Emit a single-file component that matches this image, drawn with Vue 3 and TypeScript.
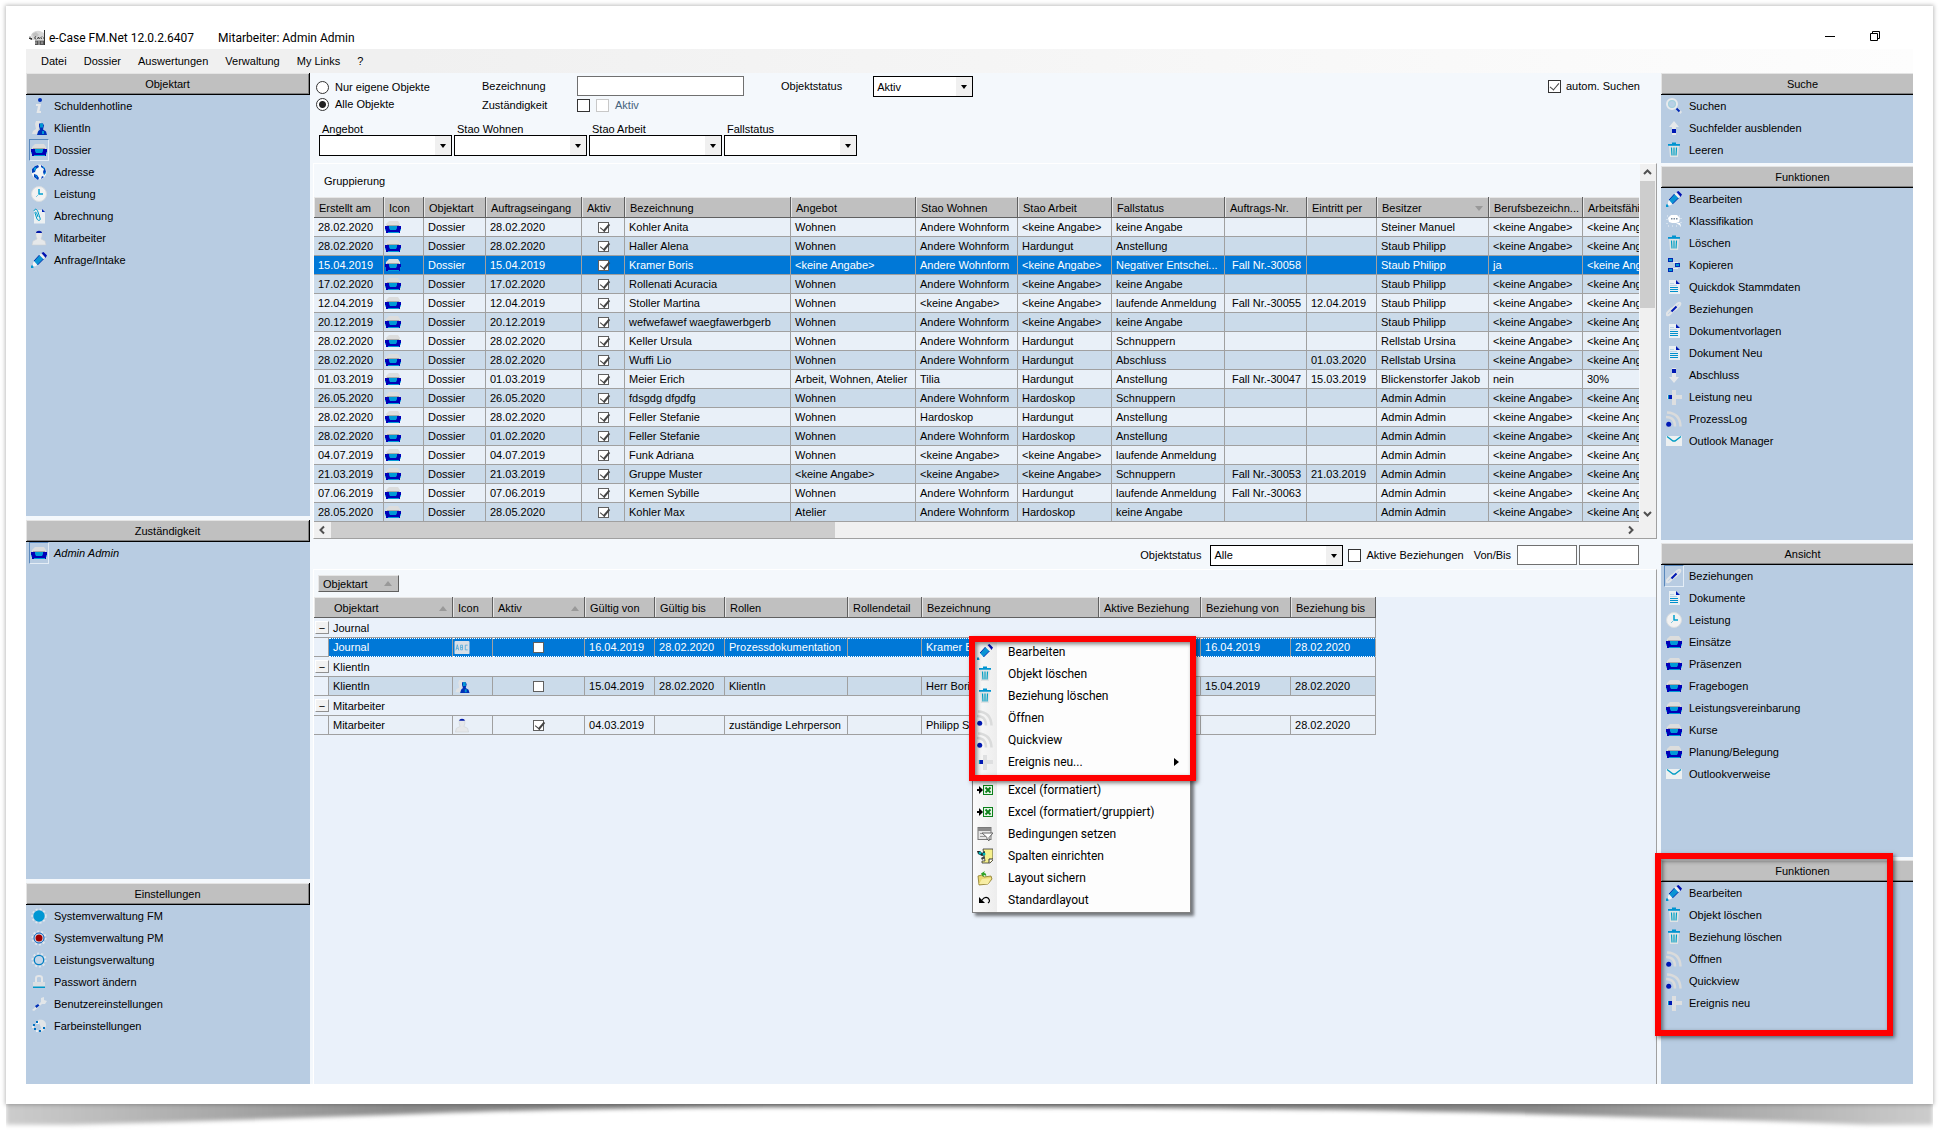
<script setup lang="ts">
import { ref } from 'vue'

interface Item {
  icon: string
  label: string
  active?: boolean
  italic?: boolean
}
interface Panel {
  title: string
  items: Item[]
}

const menuBar: string[] = ['Datei', 'Dossier', 'Auswertungen', 'Verwaltung', 'My Links', '?']

const leftPanels: Panel[] = [
  {
    title: 'Objektart',
    items: [
      { icon: 'info', label: 'Schuldenhotline' },
      { icon: 'client', label: 'KlientIn' },
      { icon: 'folder', label: 'Dossier', active: true },
      { icon: 'globe', label: 'Adresse' },
      { icon: 'clock', label: 'Leistung' },
      { icon: 'clip', label: 'Abrechnung' },
      { icon: 'person', label: 'Mitarbeiter' },
      { icon: 'pencil', label: 'Anfrage/Intake' },
    ],
  },
  { title: 'Zuständigkeit', items: [{ icon: 'folder', label: 'Admin Admin', active: true, italic: true }] },
  {
    title: 'Einstellungen',
    items: [
      { icon: 'gearfm', label: 'Systemverwaltung FM' },
      { icon: 'gearpm', label: 'Systemverwaltung PM' },
      { icon: 'gear', label: 'Leistungsverwaltung' },
      { icon: 'lock', label: 'Passwort ändern' },
      { icon: 'wrench', label: 'Benutzereinstellungen' },
      { icon: 'palette', label: 'Farbeinstellungen' },
    ],
  },
]

const rightPanels: Panel[] = [
  {
    title: 'Suche',
    items: [
      { icon: 'search', label: 'Suchen' },
      { icon: 'up', label: 'Suchfelder ausblenden' },
      { icon: 'trash', label: 'Leeren' },
    ],
  },
  {
    title: 'Funktionen',
    items: [
      { icon: 'pencil', label: 'Bearbeiten' },
      { icon: 'bubble', label: 'Klassifikation' },
      { icon: 'trash', label: 'Löschen' },
      { icon: 'copy', label: 'Kopieren' },
      { icon: 'doc', label: 'Quickdok Stammdaten' },
      { icon: 'link', label: 'Beziehungen' },
      { icon: 'doc', label: 'Dokumentvorlagen' },
      { icon: 'doc', label: 'Dokument Neu' },
      { icon: 'down', label: 'Abschluss' },
      { icon: 'plus', label: 'Leistung neu' },
      { icon: 'feed', label: 'ProzessLog' },
      { icon: 'mail', label: 'Outlook Manager' },
    ],
  },
  {
    title: 'Ansicht',
    items: [
      { icon: 'link', label: 'Beziehungen', active: true },
      { icon: 'doc', label: 'Dokumente' },
      { icon: 'clock', label: 'Leistung' },
      { icon: 'folder', label: 'Einsätze' },
      { icon: 'folder', label: 'Präsenzen' },
      { icon: 'folder', label: 'Fragebogen' },
      { icon: 'folder', label: 'Leistungsvereinbarung' },
      { icon: 'folder', label: 'Kurse' },
      { icon: 'folder', label: 'Planung/Belegung' },
      { icon: 'mail', label: 'Outlookverweise' },
    ],
  },
  {
    title: 'Funktionen',
    items: [
      { icon: 'pencil', label: 'Bearbeiten' },
      { icon: 'trash', label: 'Objekt löschen' },
      { icon: 'trash', label: 'Beziehung löschen' },
      { icon: 'feed', label: 'Öffnen' },
      { icon: 'feed', label: 'Quickview' },
      { icon: 'plus', label: 'Ereignis neu' },
    ],
  },
]

const contextTop: Item[] = [
  { icon: 'pencil', label: 'Bearbeiten' },
  { icon: 'trash', label: 'Objekt löschen' },
  { icon: 'trash', label: 'Beziehung löschen' },
  { icon: 'feed', label: 'Öffnen' },
  { icon: 'feed', label: 'Quickview' },
  { icon: 'plus', label: 'Ereignis neu...' },
]
const contextBottom: Item[] = [
  { icon: 'excel', label: 'Excel (formatiert)' },
  { icon: 'excel', label: 'Excel (formatiert/gruppiert)' },
  { icon: 'filter', label: 'Bedingungen setzen' },
  { icon: 'columns', label: 'Spalten einrichten' },
  { icon: 'save', label: 'Layout sichern' },
  { icon: 'undo', label: 'Standardlayout' },
]

const filters: string[] = ['Angebot', 'Stao Wohnen', 'Stao Arbeit', 'Fallstatus']

const NA = '<keine Angabe>'
const AW = 'Andere Wohnform'

const columns: { label: string; width: number }[] = [
  { label: 'Erstellt am', width: 70 },
  { label: 'Icon', width: 40 },
  { label: 'Objektart', width: 62 },
  { label: 'Auftragseingang', width: 96 },
  { label: 'Aktiv', width: 43 },
  { label: 'Bezeichnung', width: 166 },
  { label: 'Angebot', width: 125 },
  { label: 'Stao Wohnen', width: 102 },
  { label: 'Stao Arbeit', width: 94 },
  { label: 'Fallstatus', width: 113 },
  { label: 'Auftrags-Nr.', width: 82 },
  { label: 'Eintritt per', width: 70 },
  { label: 'Besitzer', width: 112 },
  { label: 'Berufsbezeichn...', width: 94 },
  { label: 'Arbeitsfähigkeit', width: 94 },
]

// created, received, name, Angebot, Stao Wohnen, Stao Arbeit, Fallstatus, Nr., Eintritt, Besitzer, Beruf, Arbeitsfähigkeit
const rows: string[][] = [
  ['28.02.2020', '28.02.2020', 'Kohler Anita', 'Wohnen', AW, NA, 'keine Angabe', '', '', 'Steiner Manuel', NA, NA],
  ['28.02.2020', '28.02.2020', 'Haller Alena', 'Wohnen', AW, 'Hardungut', 'Anstellung', '', '', 'Staub Philipp', NA, NA],
  ['15.04.2019', '15.04.2019', 'Kramer Boris', NA, AW, NA, 'Negativer Entschei...', 'Fall Nr.-30058', '', 'Staub Philipp', 'ja', NA],
  ['17.02.2020', '17.02.2020', 'Rollenati Acuracia', 'Wohnen', AW, NA, 'keine Angabe', '', '', 'Staub Philipp', NA, NA],
  ['12.04.2019', '12.04.2019', 'Stoller Martina', 'Wohnen', NA, NA, 'laufende Anmeldung', 'Fall Nr.-30055', '12.04.2019', 'Staub Philipp', NA, NA],
  ['20.12.2019', '20.12.2019', 'wefwefawef waegfawerbgerb', 'Wohnen', AW, NA, 'keine Angabe', '', '', 'Staub Philipp', NA, NA],
  ['28.02.2020', '28.02.2020', 'Keller Ursula', 'Wohnen', AW, 'Hardungut', 'Schnuppern', '', '', 'Rellstab Ursina', NA, NA],
  ['28.02.2020', '28.02.2020', 'Wuffi Lio', 'Wohnen', AW, 'Hardungut', 'Abschluss', '', '01.03.2020', 'Rellstab Ursina', NA, NA],
  ['01.03.2019', '01.03.2019', 'Meier Erich', 'Arbeit, Wohnen, Atelier', 'Tilia', 'Hardungut', 'Anstellung', 'Fall Nr.-30047', '15.03.2019', 'Blickenstorfer Jakob', 'nein', '30%'],
  ['26.05.2020', '26.05.2020', 'fdsgdg dfgdfg', 'Wohnen', AW, 'Hardoskop', 'Schnuppern', '', '', 'Admin Admin', NA, NA],
  ['28.02.2020', '28.02.2020', 'Feller Stefanie', 'Wohnen', 'Hardoskop', 'Hardungut', 'Anstellung', '', '', 'Admin Admin', NA, NA],
  ['28.02.2020', '01.02.2020', 'Feller Stefanie', 'Wohnen', AW, 'Hardoskop', 'Anstellung', '', '', 'Admin Admin', NA, NA],
  ['04.07.2019', '04.07.2019', 'Funk Adriana', 'Wohnen', NA, NA, 'laufende Anmeldung', '', '', 'Admin Admin', NA, NA],
  ['21.03.2019', '21.03.2019', 'Gruppe Muster', NA, NA, NA, 'Schnuppern', 'Fall Nr.-30053', '21.03.2019', 'Admin Admin', NA, NA],
  ['07.06.2019', '07.06.2019', 'Kemen Sybille', 'Wohnen', AW, 'Hardungut', 'laufende Anmeldung', 'Fall Nr.-30063', '', 'Admin Admin', NA, NA],
  ['28.05.2020', '28.05.2020', 'Kohler Max', 'Atelier', AW, 'Hardoskop', 'keine Angabe', '', '', 'Admin Admin', NA, NA],
]

const relColumns: { label: string; width: number; sort?: boolean }[] = [
  { label: 'Objektart', width: 124, sort: true },
  { label: 'Icon', width: 40 },
  { label: 'Aktiv', width: 92, sort: true },
  { label: 'Gültig von', width: 70 },
  { label: 'Gültig bis', width: 70 },
  { label: 'Rollen', width: 123 },
  { label: 'Rollendetail', width: 74 },
  { label: 'Bezeichnung', width: 177 },
  { label: 'Aktive Beziehung', width: 102 },
  { label: 'Beziehung von', width: 90 },
  { label: 'Beziehung bis', width: 85 },
]

interface Relation {
  kind: string
  icon: string
  active: boolean
  style: string
  cells: string[]
}
const relations: Relation[] = [
  { kind: 'Journal', icon: 'abc', active: false, style: 'picked', cells: ['16.04.2019', '28.02.2020', 'Prozessdokumentation', '', 'Kramer Boris', '', '16.04.2019', '28.02.2020'] },
  { kind: 'KlientIn', icon: 'client', active: false, style: 'dark', cells: ['15.04.2019', '28.02.2020', 'KlientIn', '', 'Herr Boris Kramer', '', '15.04.2019', '28.02.2020'] },
  { kind: 'Mitarbeiter', icon: 'person', active: true, style: 'light', cells: ['04.03.2019', '', 'zuständige Lehrperson', '', 'Philipp Staub', '', '', '28.02.2020'] },
]

const scope = ref('alle')
const selected = ref(2)
</script>

<template>
  <svg class="sprite" aria-hidden="true">
    <defs>
      <linearGradient id="silver" x1="0" y1="0" x2="0" y2="1">
        <stop offset="0" stop-color="#d6dadd" />
        <stop offset="1" stop-color="#f4f4f4" />
      </linearGradient>
    </defs>
    <symbol id="i-info" viewBox="0 0 16 16">
      <path d="M5 6h5l-1.500 7h1.500v2H5.500l1.500-7H5z" fill="#e6e8ea" />
      <circle cx="9" cy="2" r="2" fill="#0030b8" />
    </symbol>
    <symbol id="i-client" viewBox="0 0 16 16">
      <path d="M5 1h4l1 2-1 4-2 3v4H1l1-3 3-2-1-5z" fill="#e0e2e4" />
      <path d="M8 3.500h4l1 2-1 4 3 2 1 3.500H6l1-3.500 2-2-1-3z" fill="#0030b8" />
      <path d="M9 3.500h3v4H9zM11 11h2v3h-2z" fill="#0097d3" />
    </symbol>
    <symbol id="i-folder" viewBox="0 0 16 16">
      <path d="M2 4l2-2h9l2 3v3H1V5z" fill="#dcdddd" />
      <path d="M2 6h12v1.500H2z" fill="#a8a8a8" />
      <path d="M0 7h16v3l-1 1.500V14H1v-2.500L0 10z" fill="#0000b8" />
      <path d="M4 7h8v2l-1 2H5L4 9zM3 13h11v1H3zM0 10l1 .500V12L0 11zM16 10l-1 .500V12l1-1z" fill="#009ad6" />
    </symbol>
    <symbol id="i-globe" viewBox="0 0 16 16">
      <circle cx="8" cy="8" r="7.500" fill="#f1f4f6" />
      <path d="M1 5l3-3 3-1 1 2-3 2-1 3-3 1zM10 1l4 3 1 4-2 3-1-3 1-3-3-2zM3 10l3 1 2 3-1 2-4-3zM11 12l2 1-3 2z" fill="#0040bd" />
      <path d="M3 4l2-1v2l-2 2zM12 2l2 3-2-1zM4 11l2 1v2zM14 8l1 1-2 2z" fill="#00a4dc" />
    </symbol>
    <symbol id="i-clock" viewBox="0 0 16 16">
      <circle cx="8" cy="8" r="7.500" fill="#f2f2f2" stroke="#d9dde0" />
      <path d="M8 3v5h4" fill="none" stroke="#00a0d0" stroke-width="1.500" />
      <path d="M8 8l-3 3" stroke="#7cc8de" />
    </symbol>
    <symbol id="i-clip" viewBox="0 0 16 16">
      <path d="M3 2h8l3 3v10.500H3z" fill="#ecf0f2" />
      <path d="M11 1l3 3h-3z" fill="#0022b8" />
      <path d="M3 3c1-3 3-2 4 1l2 6c1 3-2 3-3 1L4 5c0-2 1-1 2 1l1 3" fill="none" stroke="#009bc8" />
    </symbol>
    <symbol id="i-person" viewBox="0 0 16 16">
      <path d="M5 2h6v4l-1 3 4 2 1 4H1l1-4 4-2-1-3z" fill="#e6e8ea" stroke="#cdd0d3" stroke-width=".6" />
      <path d="M5 3c0-3 6-3 6 0l-1 0H6z" fill="#0018a8" />
    </symbol>
    <symbol id="i-pencil" viewBox="0 0 16 16">
      <path d="M0 16v-2.500l2 0 .5 2.500z" fill="#0097d3" />
      <path d="M2 11l2-3 4 4-4 2.500-2-.5z" fill="#f3f5f6" />
      <path d="M3 9l5.500-6 4 4L6.500 13z" fill="#0a94d4" />
      <path d="M3 9l5.500-6M6.500 13l6-6" stroke="#0030b0" />
      <path d="M8.500 3L10 1.500 14 5.500 12.500 7z" fill="#f1f1f1" />
      <path d="M10.500 1l2-1L16 3.500 14.500 6l-1-1.500z" fill="#0010b0" />
    </symbol>
    <symbol id="i-gearfm" viewBox="0 0 16 16">
      <circle cx="8" cy="8" r="6.700" fill="none" stroke="#dfe6ec" stroke-width="2" stroke-dasharray="2 2" />
      <circle cx="8" cy="8" r="5.700" fill="#0097d3" />
    </symbol>
    <symbol id="i-gearpm" viewBox="0 0 16 16">
      <circle cx="8" cy="8" r="6.500" fill="none" stroke="#dfe6ec" stroke-width="2" stroke-dasharray="2 2" />
      <circle cx="8" cy="8" r="5" fill="#e4eaf0" stroke="#0058b8" />
      <circle cx="8" cy="8" r="3.500" fill="#a00000" />
    </symbol>
    <symbol id="i-gear" viewBox="0 0 16 16">
      <circle cx="8" cy="8" r="6.500" fill="none" stroke="#dfe6ec" stroke-width="2" stroke-dasharray="2 2" />
      <circle cx="8" cy="8" r="4.700" fill="#c4d6e8" stroke="#0080c4" stroke-width="1.300" />
    </symbol>
    <symbol id="i-lock" viewBox="0 0 16 16">
      <path d="M5 8V4q0-2 3-2t3 2v4" fill="none" stroke="#e4e6e8" stroke-width="2" />
      <path d="M2 8h12v5H2z" fill="#dcdfe2" />
      <path d="M2 12.500h12V14H2z" fill="#0097c8" />
    </symbol>
    <symbol id="i-wrench" viewBox="0 0 16 16">
      <path d="M1 14L10 6V2l3-1v3l3 1-2 3h-3l-8 7z" fill="#e2e6e9" />
      <path d="M4 10l3-2 1.500 1.500L5.500 12z" fill="#0030b8" />
    </symbol>
    <symbol id="i-palette" viewBox="0 0 16 16">
      <path d="M7 2c5-1 8 1 8 5s-3 7-7 7l2-4z" fill="#e2e5e7" />
      <path d="M5 3h3v3H5z" fill="#f4f4f4" />
      <path d="M5 3h2v2H5zM2 6h2v2H2zM3 10h2v2H3zM8 12h2v2H8zM12 9h2v2h-2z" fill="#0070c0" />
      <path d="M1 8h2v2H1zM5 12h2v2H5z" fill="#e8edf2" />
    </symbol>
    <symbol id="i-search" viewBox="0 0 16 16">
      <circle cx="6" cy="6" r="5" fill="#b8d0e6" stroke="#e8ebed" stroke-width="2" />
      <circle cx="6" cy="6" r="3.500" fill="none" stroke="#a0d2dc" />
      <path d="M10 10l2 0 4 4-1.500 2z" fill="#e0e4e8" />
      <path d="M10.500 10.500l3 3" stroke="#0028b4" stroke-width="2" />
    </symbol>
    <symbol id="i-up" viewBox="0 0 16 16">
      <path d="M8 1l5 6h-3v8H6V7H3z" fill="#e6e8ea" />
      <path d="M6 9h4v4H6z" fill="#0018b4" />
    </symbol>
    <symbol id="i-down" viewBox="0 0 16 16">
      <path d="M8 16l5-6h-3V1H6v9H3z" fill="#e6e8ea" />
      <path d="M6 2h4v4H6z" fill="#0018b4" />
    </symbol>
    <symbol id="i-trash" viewBox="0 0 16 16">
      <path d="M3 4h10l-1 11H4z" fill="#e0e3e4" />
      <path d="M2 2h12v1.700H2zM6 .5h4V2H6z" fill="#0094d0" />
      <path d="M5.500 5.500l.5 8M8 5.500v8M10.500 5.500l-.5 8" stroke="#009fc4" stroke-width="1.200" />
    </symbol>
    <symbol id="i-bubble" viewBox="0 0 16 16">
      <path d="M1 3h14v10H1z" fill="none" stroke="#edf2f6" stroke-dasharray="1 3" />
      <path d="M5 2h6l3 3-1 4-3 1H6L3 9 2 5z" fill="#fff" />
      <path d="M10 10h4l1 3z" fill="#fff" />
      <path d="M5 5h1.500v1.500H5zM7.500 5H9v1.500H7.500zM10 5h1.500v1.500H10z" fill="#788a9c" />
    </symbol>
    <symbol id="i-copy" viewBox="0 0 16 16">
      <path d="M7 5h5v1H7zM7 11h5v1H7z" fill="#e8edf2" />
      <path d="M2 1h5v4H2zM9 6h5v4H9zM2 11h5v4H2z" fill="#0028b4" />
      <path d="M3 2h3v2H3zM10 7h3v2h-3zM3 12h3v2H3z" fill="#009ad0" />
    </symbol>
    <symbol id="i-doc" viewBox="0 0 16 16">
      <path d="M3 1h7l4 4v10H3z" fill="#e9eff3" />
      <path d="M4 4h4v1H4zM4 6h7v1H4z" fill="#b9d4e8" />
      <path d="M10 1l4 4h-4z" fill="#0018b4" />
      <path d="M4 8h8v1H4zM4 10h8v1H4zM4 12h8v1H4z" fill="#0090cc" />
    </symbol>
    <symbol id="i-link" viewBox="0 0 16 16">
      <path d="M6 8l5-5q2-2 3-1t-1 3l-4 4M9 8l-5 5q-2 2-3 1t1-3l4-4" fill="none" stroke="#e2e5e8" stroke-width="2" />
      <path d="M5.500 10.500l5-5" stroke="#0018b4" stroke-width="2" />
    </symbol>
    <symbol id="i-plus" viewBox="0 0 16 16">
      <path d="M6 1h4v5h6v4h-6v6H6v-6H1V6h5z" fill="#dedfe0" />
      <path d="M3 6h3v4H3z" fill="#0018b4" />
      <path d="M2 6h1v4H2z" fill="#0090cc" />
    </symbol>
    <symbol id="i-feed" viewBox="0 0 16 16">
      <path d="M0 6q9 0 9 9.500M1 1.500Q14 2 14.500 15.500" fill="none" stroke="#dadbdb" stroke-width="2.500" />
      <circle cx="2.700" cy="13.300" r="2.500" fill="#0018b4" />
    </symbol>
    <symbol id="i-mail" viewBox="0 0 16 16">
      <path d="M0 3h16v10H0z" fill="#edf0f1" />
      <path d="M1 3.500l6 4.500h2l6-4.500" fill="none" stroke="#009cc4" stroke-width="1.300" />
    </symbol>
    <symbol id="i-abc" viewBox="0 0 16 16">
      <rect x="0" y="1" width="16" height="14" rx="1" fill="#d9dfe6" />
      <path d="M1.500 11l1.500-6 1.500 6M2 9h2M6.500 5.500v5h2V5.500zM6.500 8h2M14 5.500h-2.500v5H14" fill="none" stroke="#44a4d8" stroke-width=".8" />
    </symbol>
    <symbol id="i-excel" viewBox="0 0 16 16">
      <path d="M0 7h2V4l4 4-4 4V9H0z" fill="#000" />
      <rect x="6.500" y="3.500" width="9" height="9" fill="#e8f4e8" stroke="#0a8018" />
      <path d="M8.500 5.500l5 5M13.500 5.500l-5 5" stroke="#0a8018" stroke-width="1.800" />
    </symbol>
    <symbol id="i-filter" viewBox="0 0 16 16">
      <rect x="1" y="1.500" width="13" height="12" fill="#e6e6e6" stroke="#787878" />
      <path d="M1 2h13v3H1z" fill="#8a8a8a" />
      <path d="M3 7.500h10M3 10.500h6" stroke="#999" />
      <path d="M5 7h11l-4 4.500V15l-2-2v-1.500z" fill="#fff" stroke="#666" />
    </symbol>
    <symbol id="i-columns" viewBox="0 0 16 16">
      <path d="M6 1h10v11l-3 3H5v-2h3z" fill="#f6f08c" stroke="#333" stroke-width=".8" />
      <path d="M12 15v-4h4" fill="#fff" stroke="#333" />
      <path d="M0 3h3l2 2 3-2v4L5 8 1 6z" fill="#222" />
      <circle cx="3" cy="5" r="1.500" fill="#00b4b8" />
      <circle cx="7" cy="6" r="1.500" fill="#00b4b8" />
      <path d="M4 10l3-2 1 2-3 2z" fill="#444" />
    </symbol>
    <symbol id="i-save" viewBox="0 0 16 16">
      <path d="M1 6l4-1 2 2 7-1 1 3-4 5-9 1z" fill="#e9d873" stroke="#8a7a28" stroke-width=".8" />
      <path d="M2 14l3-5 9-1-3 6z" fill="#f7eda4" />
      <path d="M8 1L4 3.500 6 7l1-2q2 0 2 2 1-4-2-4z" fill="#30a428" />
    </symbol>
    <symbol id="i-undo" viewBox="0 0 16 16">
      <path d="M5 8q3-4 6-2 3 3 0 5" fill="none" stroke="#000" stroke-width="1.200" />
      <path d="M2 5v6h6z" fill="#000" />
    </symbol>
    <symbol id="i-app" viewBox="0 0 16 16">
      <path d="M2 5q3-5 9-4l4 2v7H3z" fill="#d8d8d8" />
      <path d="M3 4l4-2 3 3-4 3z" fill="#c0c0c0" />
      <path d="M0 8.500h3M1 6.500q-1 3 2 3M7 6.500q-3 1 0 3M8.500 9l1-2 1 2M13 6.500q-2 1-.5 2.500M14 8h2" fill="none" stroke="#333" />
      <path d="M6 10.500h9.500V15H6z" fill="#555" />
      <path d="M7 11.500v2.500M9 12h2M9 14h2M13 11.500v2.500" stroke="#eee" stroke-width=".7" />
      <path d="M15.500 0v15" stroke="#333" />
    </symbol>
  </svg>

  <div class="page">
    <main class="card">
      <header class="titlebar">
        <svg class="icon"><use href="#i-app" /></svg>
        <span class="app-name">e-Case FM.Net 12.0.2.6407</span>
        <span class="user">Mitarbeiter: Admin Admin</span>
        <button class="win" type="button" aria-label="Minimieren">
          <svg width="12" height="12"><path d="M1 6.500h10" stroke="#000" /></svg>
        </button>
        <button class="win" type="button" aria-label="Verkleinern">
          <svg width="12" height="12"><path d="M3.500 3V1.500h7v7H9M1.500 3.500h7v7h-7z" fill="none" stroke="#000" /></svg>
        </button>
      </header>

      <nav class="menubar">
        <button v-for="m in menuBar" :key="m" type="button">{{ m }}</button>
      </nav>

      <div class="body">
        <aside class="side left">
          <section v-for="p in leftPanels" :key="p.title" class="panel">
            <h2>{{ p.title }}</h2>
            <button v-for="i in p.items" :key="i.label" type="button" class="item" :class="{ active: i.active, italic: i.italic }">
              <span class="slot"><svg class="icon"><use :href="'#i-' + i.icon" /></svg></span>{{ i.label }}
            </button>
          </section>
        </aside>

        <div class="center">
          <form class="search" @submit.prevent>
            <div class="search-main">
              <div class="radios">
                <label><input v-model="scope" type="radio" name="scope" value="eigene" />Nur eigene Objekte</label>
                <label><input v-model="scope" type="radio" name="scope" value="alle" />Alle Objekte</label>
              </div>
              <div class="fields">
                <label for="bez">Bezeichnung</label>
                <input id="bez" class="text" type="text" />
                <label for="zust">Zuständigkeit</label>
                <div class="checks">
                  <input id="zust" class="tick" type="checkbox" />
                  <label class="muted"><input class="tick" type="checkbox" disabled />Aktiv</label>
                </div>
              </div>
              <label for="status">Objektstatus</label>
              <span class="combo short"><select id="status"><option>Aktiv</option></select></span>
              <label class="auto"><input class="tick" type="checkbox" checked />autom. Suchen</label>
            </div>
            <div class="filters">
              <div v-for="f in filters" :key="f" class="filter">
                <label :for="'f-' + f">{{ f }}</label>
                <span class="combo"><select :id="'f-' + f"><option></option></select></span>
              </div>
            </div>
          </form>

          <section class="grid-box">
            <div class="grid-row">
              <div class="grid-view">
                <div class="grouping">Gruppierung</div>
                <table class="grid wide">
                  <colgroup><col v-for="c in columns" :key="c.label" :style="{ width: c.width + 'px' }" /></colgroup>
                  <thead>
                    <tr>
                      <th v-for="c in columns" :key="c.label">
                        {{ c.label }}<svg v-if="c.label === 'Besitzer'" class="sort" width="8" height="5"><path d="M0 0h8L4 5z" fill="#999" /></svg>
                      </th>
                    </tr>
                  </thead>
                  <tbody>
                    <tr v-for="(r, n) in rows" :key="n" :class="{ dark: n % 2 === 1, picked: n === selected }" @click="selected = n">
                      <td>{{ r[0] }}</td>
                      <td class="pic"><svg class="icon"><use href="#i-folder" /></svg></td>
                      <td>Dossier</td>
                      <td>{{ r[1] }}</td>
                      <td class="mid"><input class="cell-tick" type="checkbox" checked aria-label="Aktiv" /></td>
                      <td v-for="k in 10" :key="k" :class="{ right: k === 6 }">{{ r[k + 1] }}</td>
                    </tr>
                  </tbody>
                </table>
              </div>
              <div class="vscroll">
                <svg width="15" height="17"><path d="M4 10l3.500-3.500L11 10" fill="none" stroke="#505050" stroke-width="2" /></svg>
                <div class="thumb"></div>
                <svg width="15" height="17"><path d="M4 7l3.500 3.500L11 7" fill="none" stroke="#505050" stroke-width="2" /></svg>
              </div>
            </div>
            <div class="hscroll">
              <svg width="17" height="16"><path d="M10 4.500L6.500 8l3.500 3.500" fill="none" stroke="#505050" stroke-width="2" /></svg>
              <div class="thumb"></div>
              <svg width="17" height="16"><path d="M7 4.500L10.500 8 7 11.500" fill="none" stroke="#505050" stroke-width="2" /></svg>
            </div>
          </section>

          <form class="relbar" @submit.prevent>
            <label for="relstatus">Objektstatus</label>
            <span class="combo"><select id="relstatus"><option>Alle</option></select></span>
            <label class="aktive"><input class="tick" type="checkbox" />Aktive Beziehungen</label>
            <label for="von" class="von">Von/Bis</label>
            <input id="von" class="text date" type="text" />
            <input class="text date" type="text" aria-label="Bis" />
          </form>

          <section class="relations">
            <div class="groupbar">
              <button class="groupchip" type="button">Objektart<svg width="8" height="5"><path d="M0 5h8L4 0z" fill="#999" /></svg></button>
            </div>
            <table class="grid rel">
              <colgroup>
                <col class="indent" />
                <col v-for="c in relColumns" :key="c.label" :style="{ width: c.width + 'px' }" />
              </colgroup>
              <thead>
                <tr>
                  <th v-for="(c, n) in relColumns" :key="c.label" :colspan="n === 0 ? 2 : 1" :class="{ first: n === 0 }">
                    {{ c.label }}<svg v-if="c.sort" class="sort" width="8" height="5"><path d="M0 5h8L4 0z" fill="#999" /></svg>
                  </th>
                </tr>
              </thead>
              <tbody v-for="r in relations" :key="r.kind">
                <tr class="group">
                  <td colspan="12"><button type="button" aria-label="Zuklappen">−</button>{{ r.kind }}</td>
                </tr>
                <tr :class="r.style">
                  <td class="gap"></td>
                  <td>{{ r.kind }}</td>
                  <td class="pic"><svg class="icon"><use :href="'#i-' + r.icon" /></svg></td>
                  <td class="mid"><input class="cell-tick" type="checkbox" :checked="r.active" aria-label="Aktiv" /></td>
                  <td v-for="(c, k) in r.cells" :key="k">{{ c }}</td>
                </tr>
              </tbody>
            </table>

            <div class="context">
              <button v-for="(i, n) in contextTop" :key="n" type="button">
                <svg class="icon"><use :href="'#i-' + i.icon" /></svg>{{ i.label }}
                <svg v-if="n === 5" class="more" width="5" height="8"><path d="M0 0l5 4-5 4z" fill="#000" /></svg>
              </button>
              <hr />
              <button v-for="i in contextBottom" :key="i.label" type="button">
                <svg class="icon"><use :href="'#i-' + i.icon" /></svg>{{ i.label }}
              </button>
            </div>
            <div class="mark mark-menu"></div>
          </section>
        </div>

        <aside class="side right">
          <section v-for="(p, n) in rightPanels" :key="n" class="panel">
            <h2>{{ p.title }}</h2>
            <button v-for="i in p.items" :key="i.label" type="button" class="item" :class="{ active: i.active }">
              <span class="slot"><svg class="icon"><use :href="'#i-' + i.icon" /></svg></span>{{ i.label }}
            </button>
          </section>
          <div class="mark mark-side"></div>
        </aside>
      </div>
    </main>
    <svg class="curl" viewBox="0 0 1927 28" preserveAspectRatio="none" aria-hidden="true">
      <defs>
        <linearGradient id="curl-tone">
          <stop offset="0" stop-color="#cccccc" />
          <stop offset=".2" stop-color="#8c8c8c" />
          <stop offset=".5" stop-color="#787878" />
          <stop offset=".8" stop-color="#8c8c8c" />
          <stop offset="1" stop-color="#cccccc" />
        </linearGradient>
        <filter id="curl-soft" x="-1%" y="-50%" width="102%" height="200%"><feGaussianBlur stdDeviation="2" /></filter>
      </defs>
      <path d="M0 -8H1927V20H1860Q1700 14 1500 9T964 3T427 9T67 20H0z" fill="url(#curl-tone)" filter="url(#curl-soft)" />
    </svg>
  </div>
</template>

<style>
body {
  margin: 0;
  background: #fff;
}
</style>

<style scoped>
* {
  box-sizing: border-box;
}
button,
input,
select {
  font: inherit;
  color: inherit;
  margin: 0;
  padding: 0;
  border: 0;
  border-radius: 0;
  background: none;
}
.sprite {
  position: absolute;
  width: 0;
  height: 0;
}
.page {
  display: flex;
  flex-direction: column;
  min-height: 100vh;
  padding: 6px 14px 0 6px;
  overflow: hidden;
  font: 11px/14px 'Liberation Sans', Arial, sans-serif;
  color: #000;
}
.card {
  display: flex;
  flex-direction: column;
  flex: 1;
  padding: 20px;
  background: #fff;
  box-shadow: 0 0 4px 1px rgba(0, 0, 0, 0.25);
  position: relative;
}
.curl {
  display: block;
  width: 100%;
  height: 29px;
}
.icon {
  display: block;
  flex: none;
  width: 16px;
  height: 16px;
}
.titlebar {
  display: flex;
  align-items: center;
  height: 23px;
  padding: 0 32px 0 3px;
  font: 12px/16px Roboto, 'Open Sans', sans-serif;
}
.app-name {
  margin-left: 4px;
}
.user {
  margin-left: 24px;
  margin-right: auto;
}
.win {
  width: 12px;
  height: 20px;
  margin-left: 33px;
}
.menubar {
  display: flex;
  gap: 17px;
  height: 24px;
  padding-left: 15px;
  background: linear-gradient(90deg, #f0f0f0 20%, #fdfdfd);
}
.body {
  display: grid;
  grid-template-columns: 284px minmax(0, 1fr) 252px;
  flex: 1;
  background: #f4f8fc;
}
.side {
  display: grid;
  min-width: 0;
}
.left {
  gap: 4px;
  grid-template-rows: 443fr 359fr 201fr;
}
.right {
  position: relative;
  gap: 3px;
  grid-template-rows: 90px 374fr 314fr 224fr;
}
.panel {
  background: #b8cce2;
  overflow: hidden;
}
.panel h2 {
  width: 284px;
  height: 22px;
  margin: 0;
  font: inherit;
  line-height: 22px;
  text-align: center;
  background: #c0c0c0;
  border-right: 1px solid #000;
  border-bottom: 1px solid #000;
  box-shadow: inset 1px 1px #e4e4e4, inset -1px -1px #808080;
}
.item {
  display: flex;
  align-items: center;
  width: 100%;
  height: 22px;
  padding-left: 3px;
  text-align: left;
}
.slot {
  display: block;
  height: 22px;
  width: 20px;
  margin-right: 5px;
  padding: 2px 1px;
  border: 1px solid transparent;
}
.active .slot {
  border-color: #5a88bc #e4edf6 #e4edf6 #5a88bc;
}
.italic {
  font-style: italic;
}
.center {
  display: flex;
  flex-direction: column;
  min-width: 0;
  padding: 0 4px 0 3px;
}
.search {
  height: 90px;
  padding: 3px 17px 0 3px;
}
.search-main {
  display: flex;
  align-items: flex-start;
  height: 49px;
}
.search-main > label {
  padding-top: 3px;
}
.radios {
  display: flex;
  flex-direction: column;
  gap: 3px;
  width: 166px;
  padding-top: 4px;
}
.radios label,
.checks,
.checks label,
.auto {
  display: flex;
  align-items: center;
}
.radios input {
  appearance: none;
  width: 13px;
  height: 13px;
  margin-right: 6px;
  border: 1px solid #333;
  border-radius: 50%;
  background: #fff;
}
.radios input:checked {
  background: radial-gradient(circle, #222 3px, #fff 4px);
}
.fields {
  display: grid;
  grid-template-columns: 95px 167px;
  grid-template-rows: 20px 18px;
  align-items: center;
  margin-right: 37px;
}
.text {
  height: 20px;
  padding: 0 3px;
  background: #fff;
  border: 1px solid #707070;
}
.tick,
.cell-tick {
  appearance: none;
  position: relative;
  flex: none;
  width: 13px;
  height: 13px;
  background: #fff;
  border: 1px solid #333;
}
.tick:checked::after,
.cell-tick:checked::after {
  content: '';
  position: absolute;
  left: 3px;
  top: 0;
  width: 4px;
  height: 8px;
  border: solid #444;
  border-width: 0 1px 1px 0;
  transform: rotate(40deg);
}
.cell-tick {
  display: block;
  width: 11px;
  height: 11px;
  margin: 0 auto;
  border-color: #606060;
}
.cell-tick:checked::after {
  top: -1px;
  border-width: 0 2px 1px 0;
}
.checks .tick {
  margin-right: 6px;
}
.muted {
  color: #44637c;
}
.tick:disabled {
  border-color: #c8c8c8;
}
.combo {
  position: relative;
  display: block;
  width: 133px;
  height: 21px;
  background: #fff;
  border: 1px solid #000;
}
.combo select {
  appearance: none;
  display: block;
  width: 100%;
  height: 100%;
  padding: 0 18px 0 3px;
}
.combo::before {
  content: '';
  position: absolute;
  top: 0;
  right: 0;
  width: 16px;
  height: 100%;
  background: #f0f0f0;
  pointer-events: none;
}
.combo::after {
  content: '';
  position: absolute;
  top: 8px;
  right: 5px;
  border: solid transparent;
  border-width: 4px 3px 0;
  border-top-color: #000;
  pointer-events: none;
}
.combo.short {
  width: 100px;
  margin-left: 31px;
}
.auto {
  margin-left: auto;
}
.auto .tick,
.aktive .tick {
  margin-right: 5px;
}
.filters {
  display: flex;
  gap: 2px;
  padding-left: 3px;
}
.filter label {
  display: block;
  height: 10px;
  padding-left: 3px;
  line-height: 8px;
}
.grid-box {
  border-top: 1px solid #fff;
  border-right: 1px solid #a0a0a0;
  border-bottom: 1px solid #a0a0a0;
  border-left: 1px solid #fff;
}
.grid-row {
  display: flex;
  height: 358px;
}
.grid-view {
  flex: 1;
  min-width: 0;
  overflow: hidden;
  margin-right: 1px;
}
.grouping {
  height: 33px;
  padding-left: 10px;
  line-height: 35px;
}
.grid {
  table-layout: fixed;
  border-collapse: separate;
  border-spacing: 0;
  white-space: nowrap;
}
.wide {
  width: 1363px;
}
.rel {
  width: 1062px;
}
.indent {
  width: 15px;
}
.grid th {
  position: relative;
  height: 21px;
  padding: 1px 0 0 5px;
  font-weight: normal;
  text-align: left;
  overflow: hidden;
  background: #c0c0c0;
  border-right: 1px solid #606060;
  border-bottom: 1px solid #606060;
  box-shadow: inset 1px 1px #e6e6e6;
}
.grid th.first {
  padding-left: 20px;
}
.sort {
  position: absolute;
  right: 5px;
  top: 9px;
}
.grid td {
  height: 19px;
  padding: 0 0 0 4px;
  overflow: hidden;
  background: #e9f0f8;
  border-right: 1px solid #a0a0a0;
  border-bottom: 1px solid #a0a0a0;
}
.grid .dark td {
  background: #cbdbea;
}
.grid .picked td {
  color: #fff;
  background: #0078d7;
}
.grid td.pic {
  padding: 0 0 0 1px;
}
.grid td.mid {
  padding: 0;
}
.grid td.right {
  padding: 0 5px 0 0;
  text-align: right;
}
.vscroll {
  display: flex;
  flex-direction: column;
  width: 16px;
  background: #f0f0f0;
}
.vscroll .thumb {
  width: 15px;
  height: 127px;
  margin-bottom: auto;
  background: #cdcdcd;
}
.hscroll {
  display: flex;
  height: 16px;
  padding-right: 17px;
  background: #f0f0f0;
}
.hscroll .thumb {
  width: 504px;
  margin-right: auto;
  background: #cdcdcd;
}
.relbar {
  display: flex;
  align-items: center;
  justify-content: flex-end;
  height: 30px;
  padding: 2px 18px 0 0;
}
.relbar .combo {
  margin: 0 5px 0 9px;
}
.aktive {
  display: flex;
  align-items: center;
}
.von {
  margin: 0 6px 0 10px;
}
.date {
  width: 60px;
}
.date + .date {
  margin-left: 2px;
}
.relations {
  position: relative;
  flex: 1;
  min-height: 380px;
  background: #eaf1fa;
  border: 1px solid #fff;
  border-right-color: #a0a0a0;
  border-bottom: 0;
}
.groupbar {
  height: 27px;
  padding: 5px 4px;
  background: #f4f8fc;
}
.groupchip {
  display: flex;
  align-items: center;
  justify-content: space-between;
  width: 81px;
  height: 17px;
  padding: 0 6px 0 4px;
  background: #c0c0c0;
  border: 1px solid;
  border-color: #e6e6e6 #606060 #606060 #e6e6e6;
}
.grid .group td {
  height: 20px;
  padding: 0;
  background: #eaf1fa;
}
.group button {
  width: 14px;
  height: 13px;
  margin: 0 4px 0 1px;
  line-height: 10px;
  background: #f2f2f2;
  border: 1px solid;
  border-color: #fff #909090 #909090 #fff;
}
.grid td.gap,
.grid tr td.gap {
  color: #000;
  background: #eaf1fa;
}
.rel .picked td:not(.gap) {
  border-top: 1px dotted #fff;
  border-bottom: 1px dotted #fff;
  line-height: 13px;
}
.rel .icon {
  height: 15px;
}
.context {
  position: absolute;
  left: 658px;
  top: 69px;
  width: 219px;
  padding: 1px;
  font: 12px/16px Roboto, 'Open Sans', sans-serif;
  background: linear-gradient(90deg, #fbfbfb, #ededed 24px, #fdfdfd 24px);
  border: 1px solid #808080;
  box-shadow: 3px 3px 3px rgba(0, 0, 0, 0.5);
}
.context button {
  display: flex;
  align-items: center;
  gap: 15px;
  width: 100%;
  height: 22px;
  padding: 0 10px 0 3px;
  text-align: left;
}
.context hr {
  height: 1px;
  margin: 3px 0 2px 30px;
  border: 0;
  background: #d7d7d7;
}
.more {
  margin-left: auto;
}
.mark {
  position: absolute;
  border: 6px solid #f00;
  box-shadow: 2px 2px 4px rgba(0, 0, 0, 0.5), inset 2px 2px 4px rgba(0, 0, 0, 0.5);
  pointer-events: none;
}
.mark-menu {
  left: 655px;
  top: 66px;
  width: 227px;
  height: 145px;
}
.mark-side {
  left: -6px;
  right: 20px;
  bottom: 48px;
  height: 183px;
}
</style>
